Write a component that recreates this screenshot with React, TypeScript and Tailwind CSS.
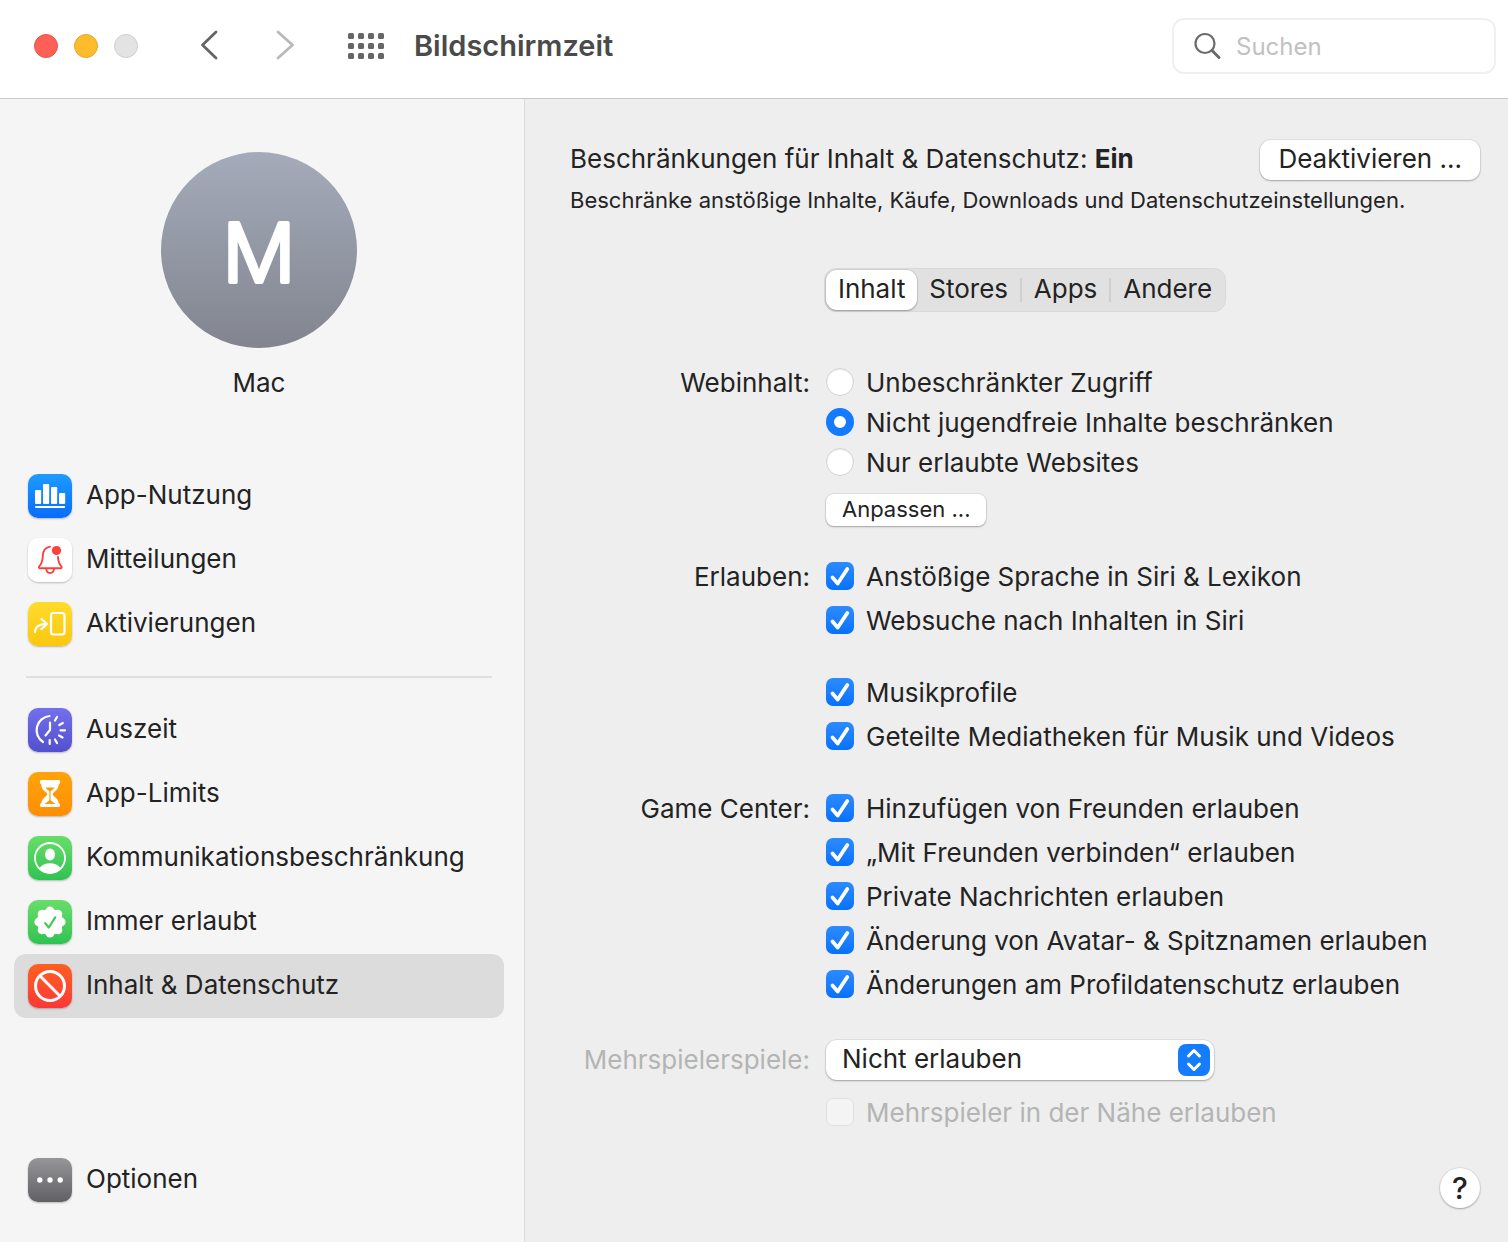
import { useState, type ReactNode } from "react";

type NavItem = {
  label: string;
  tile: string;
  icon: ReactNode;
};

const usage: NavItem[] = [
  {
    label: "App-Nutzung",
    tile: "from-[#1f9bff] to-[#0a6cfb]",
    icon: (
      <svg viewBox="0 0 44 44" fill="#fff">
        <rect x="7" y="16" width="6.200" height="14" rx="1" />
        <rect x="15" y="10" width="6.200" height="20" rx="1" />
        <rect x="23" y="13" width="6.200" height="17" rx="1" />
        <rect x="31" y="19" width="6.200" height="11" rx="1" />
        <rect x="7" y="32" width="30.200" height="2" rx="1" />
      </svg>
    ),
  },
  {
    label: "Mitteilungen",
    tile: "from-white to-white",
    icon: (
      <svg viewBox="0 0 44 44" fill="none" stroke="#f8413c" strokeWidth="1.9" strokeLinecap="round" strokeLinejoin="round">
        <path d="M22 8.6c-4.6.8-7 4.200-7.200 9.200-.2 6-1.100 8-3.400 10.400-.9 1-.5 2 .8 2h20.200c1.300 0 1.700-1 .8-2-2-2.100-2.900-4-3.200-9.200" />
        <path d="M18.200 31c.3 2.600 1.800 4 3.900 4s3.600-1.400 3.900-4" />
        <circle cx="28.500" cy="12.500" r="4.600" fill="#f8413c" stroke="none" />
      </svg>
    ),
  },
  {
    label: "Aktivierungen",
    tile: "from-[#fddd2a] to-[#fbc70d]",
    icon: (
      <svg viewBox="0 0 44 44" fill="none" stroke="#fff" strokeWidth="2.200" strokeLinecap="round" strokeLinejoin="round">
        <path d="M7 30c.3-5.500 3.500-8 11.500-8" />
        <path d="M13.500 17l5.500 5-5.500 5" />
        <rect x="23" y="11" width="13.500" height="21.500" rx="2.500" />
      </svg>
    ),
  },
];

const limits: NavItem[] = [
  {
    label: "Auszeit",
    tile: "from-[#7370ee] to-[#5350cd]",
    icon: (
      <svg viewBox="0 0 44 44" fill="none" stroke="#fff" strokeWidth="2.200" strokeLinecap="round" strokeLinejoin="round">
        <path d="M21.500 8a14.200 14.200 0 0 0-6.500 26" />
        <path d="M22 14.500V22l-4.500 5.500" />
        <path d="M27 12.500l2-3.500M31.300 17l3.500-2M32.500 22.300H37M31 27.500l3.500 2M27 31.500l2 3.500M21.700 32v4" />
      </svg>
    ),
  },
  {
    label: "App-Limits",
    tile: "from-[#ffa30a] to-[#ff8e05]",
    icon: (
      <svg viewBox="0 0 44 44">
        <path
          fill="#fff"
          d="M13.500 8h17c1 0 1.500.6 1.500 1.500v1c0 1-.5 1.500-1.300 1.700-.2 4.300-2.200 6.200-4.700 8-1.700 1.200-1.700 2.800 0 4 2.500 1.800 4.500 3.700 4.700 7 .8.200 1.300.8 1.300 1.700v.6c0 1-.5 1.500-1.500 1.500h-17c-1 0-1.500-.5-1.500-1.500v-.6c0-.9.500-1.500 1.300-1.700.2-3.300 2.200-5.200 4.700-7 1.700-1.200 1.700-2.800 0-4-2.500-1.800-4.500-3.700-4.700-8-.8-.2-1.300-.7-1.300-1.700v-1c0-.9.500-1.500 1.500-1.500z"
        />
        <path
          fill="#ff980a"
          d="M17.500 15.500h9c-.9 1.500-2.300 2.500-3.400 3.300-.3.300-.5.700-.5 1.200v7.500c0 .5.200.9.600 1.200l4.300 3.300h-11l4.300-3.300c.4-.3.600-.7.600-1.200V20c0-.5-.2-.9-.5-1.200-1.100-.8-2.500-1.800-3.400-3.300z"
        />
      </svg>
    ),
  },
  {
    label: "Kommunikationsbeschränkung",
    tile: "from-[#67de69] to-[#2fc253]",
    icon: (
      <svg viewBox="0 0 44 44" fill="#fff">
        <circle cx="22" cy="22" r="15" fill="none" stroke="#fff" strokeWidth="1.800" />
        <ellipse cx="22" cy="18.500" rx="5" ry="6" />
        <path d="M11.500 32c2-3.300 6-4.800 10.500-4.800s8.500 1.500 10.500 4.800c-2.700 3-6.300 5-10.500 5s-7.800-2-10.500-5z" />
      </svg>
    ),
  },
  {
    label: "Immer erlaubt",
    tile: "from-[#67de69] to-[#2fc253]",
    icon: (
      <svg viewBox="0 0 44 44" fill="#fff">
        <circle cx="22" cy="22" r="13" />
        {[0, 45, 90, 135, 180, 225, 270, 315].map((angle) => (
          <circle key={angle} cx="22" cy="10.800" r="4.400" transform={`rotate(${angle} 22 22)`} />
        ))}
        <path d="M17.200 23.200l3.600 4.300 6.400-10.200" fill="none" stroke="#43c95a" strokeWidth="2.200" strokeLinecap="round" strokeLinejoin="round" />
      </svg>
    ),
  },
  {
    label: "Inhalt & Datenschutz",
    tile: "from-[#ff5f20] to-[#fb3737]",
    icon: (
      <svg viewBox="0 0 44 44" fill="none" stroke="#fff" strokeWidth="3">
        <circle cx="22" cy="22" r="14.500" />
        <path d="M11.800 11.800l20.400 20.400" />
      </svg>
    ),
  },
];

const options: NavItem = {
  label: "Optionen",
  tile: "from-[#969699] to-[#616165]",
  icon: (
    <svg viewBox="0 0 44 44" fill="#fff">
      <circle cx="11.800" cy="22" r="2.700" />
      <circle cx="22" cy="22" r="2.700" />
      <circle cx="32.200" cy="22" r="2.700" />
    </svg>
  ),
};

const tabs = ["Inhalt", "Stores", "Apps", "Andere"];
const webModes = ["Unbeschränkter Zugriff", "Nicht jugendfreie Inhalte beschränken", "Nur erlaubte Websites"];

const raised = "bg-white shadow-[0_0_0_1px_rgba(0,0,0,0.06),0_1px_2px_rgba(0,0,0,0.28)]";

function NavButton({ item, active, onClick }: { item: NavItem; active: boolean; onClick: () => void }) {
  return (
    <button
      type="button"
      onClick={onClick}
      aria-current={active ? "page" : undefined}
      className={`flex h-16 w-full items-center gap-3.5 rounded-[12px] px-3.5 text-left ${active ? "bg-[#dcdcdc]" : ""}`}
    >
      <span className={`size-11 shrink-0 rounded-[10px] bg-linear-to-b shadow-[0_1px_2px_rgba(0,0,0,0.25)] ${item.tile}`}>
        {item.icon}
      </span>
      <span className="pb-0.5">{item.label}</span>
    </button>
  );
}

function Radio({ label, checked, onChange }: { label: string; checked: boolean; onChange: () => void }) {
  return (
    <label className="flex h-10 items-center gap-3">
      <input
        type="radio"
        name="webinhalt"
        checked={checked}
        onChange={onChange}
        className="size-7 shrink-0 appearance-none rounded-full border border-[#d2d2d2] bg-white shadow-[inset_0_1px_1px_rgba(0,0,0,0.08)] checked:border-[8px] checked:border-[#147bfe] checked:shadow-none"
      />
      <span className="pt-0.5">{label}</span>
    </label>
  );
}

function Check({ label, disabled = false }: { label: string; disabled?: boolean }) {
  return (
    <label className={`flex h-11 items-center gap-3 ${disabled ? "text-[#b4b4b4]" : ""}`}>
      <span className="relative size-7 shrink-0">
        <input
          type="checkbox"
          defaultChecked={!disabled}
          disabled={disabled}
          className="peer block size-7 appearance-none rounded-[7px] border border-[#d2d2d2] bg-white checked:border-0 checked:bg-linear-to-b checked:from-[#2b8bff] checked:to-[#0671fb] disabled:border-[#dfdfdf] disabled:bg-[#f4f4f4]"
        />
        <svg
          viewBox="0 0 28 28"
          className="pointer-events-none absolute inset-0 hidden peer-checked:block"
          fill="none"
          stroke="#fff"
          strokeWidth="3.800"
          strokeLinecap="round"
          strokeLinejoin="round"
        >
          <path d="M6.500 15.500l5.200 6L21.300 7" />
        </svg>
      </span>
      <span className="pt-0.5">{label}</span>
    </label>
  );
}

function Group({ label, children }: { label?: string; children: ReactNode }) {
  return (
    <fieldset className="grid grid-cols-[240px_1fr] gap-x-4" aria-label={label}>
      <div className="text-right leading-[46px]">{label}</div>
      <div>{children}</div>
    </fieldset>
  );
}

export default function App() {
  const [page, setPage] = useState("Inhalt & Datenschutz");
  const [tab, setTab] = useState("Inhalt");
  const [mode, setMode] = useState(webModes[1]);

  const nav = (item: NavItem) => (
    <NavButton key={item.label} item={item} active={page === item.label} onClick={() => setPage(item.label)} />
  );

  return (
    <div className="flex min-h-screen flex-col bg-[#eeeeee] font-['Inter','Liberation_Sans',sans-serif] text-[26px] leading-8 text-[#232323]">
      <header className="flex h-[99px] items-center border-b border-[#c8c8c8] bg-white pr-3 pb-1.5 pl-[34px]">
        <div className="flex gap-4">
          <button type="button" aria-label="Schließen" className="size-6 rounded-full border border-[#e9524c] bg-[#fe5f57]" />
          <button type="button" aria-label="Minimieren" className="size-6 rounded-full border border-[#e5a826] bg-[#febb2c]" />
          <button type="button" aria-label="Zoomen" className="size-6 rounded-full border border-[#cfcfcf] bg-[#e3e3e3]" />
        </div>
        <button type="button" aria-label="Zurück" className="ml-[60px] pb-0.5">
          <svg width="22" height="32" viewBox="0 0 22 32" fill="none" stroke="#656565" strokeWidth="2.800" strokeLinecap="round" strokeLinejoin="round">
            <path d="M18 3L4.500 16 18 29" />
          </svg>
        </button>
        <button type="button" aria-label="Vorwärts" className="ml-[54px] pb-0.5">
          <svg width="22" height="32" viewBox="0 0 22 32" fill="none" stroke="#b9b9b9" strokeWidth="2.800" strokeLinecap="round" strokeLinejoin="round">
            <path d="M4 3l14.500 13L4 29" />
          </svg>
        </button>
        <button type="button" aria-label="Alle einblenden" className="ml-[52px]">
          <svg width="36" height="26" viewBox="0 0 36 26" fill="#666">
            {[0, 10, 20, 30].map((x) =>
              [0, 10, 20].map((y) => <rect key={`${x}-${y}`} x={x} y={y} width="6" height="6" rx="1.500" />)
            )}
          </svg>
        </button>
        <h1 className="ml-[30px] text-[29px] font-semibold text-[#4a4a4a]">Bildschirmzeit</h1>
        <label className="ml-auto flex h-14 w-[324px] items-center gap-3.5 rounded-[12px] border-2 border-[#f0f0f0] pl-5">
          <svg width="28" height="28" viewBox="0 0 28 28" className="shrink-0" fill="none" stroke="#6b6b6b" strokeLinecap="round">
            <circle cx="11" cy="11.500" r="9.500" strokeWidth="2.200" />
            <path d="M18 18.500l7 7" strokeWidth="3" />
          </svg>
          <input type="search" aria-label="Suchen" placeholder="Suchen" className="w-full min-w-0 bg-transparent pt-0.5 text-[24px] outline-none placeholder:text-[#c1c1c1]" />
        </label>
      </header>

      <div className="flex flex-1">
        <aside className="flex w-[525px] shrink-0 flex-col border-r border-[#dcdcdc] bg-[#f5f5f5] pt-[53px] pr-5 pb-[30px] pl-3.5">
          <div className="flex flex-col items-center">
            <div className="size-[196px] rounded-full bg-linear-to-b from-[#a4abba] to-[#82858f]">
              <svg viewBox="0 0 196 196" role="img" aria-label="Mac">
                <text
                  x="98"
                  y="130"
                  textAnchor="middle"
                  className="text-[81px] font-light"
                  fill="#fff"
                  stroke="#fff"
                  strokeWidth="4"
                  strokeLinejoin="round"
                >
                  M
                </text>
              </svg>
            </div>
            <p className="mt-[19px]">Mac</p>
          </div>
          <nav className="mt-[65px]">
            {usage.map(nav)}
            <hr className="mx-3 my-5 border-t-2 border-[#dfdfdf]" />
            {limits.map(nav)}
          </nav>
          <div className="mt-auto">{nav(options)}</div>
        </aside>

        <main className="flex flex-1 flex-col pt-10 pr-7 pb-[34px] pl-[45px]">
          <div className="flex h-[42px] items-center justify-between">
            <h2 className="pb-0.5">
              Beschränkungen für Inhalt &amp; Datenschutz: <strong className="font-bold">Ein</strong>
            </h2>
            <button type="button" className={`h-10 rounded-[11px] px-[18px] pb-0.5 ${raised}`}>
              Deaktivieren ...
            </button>
          </div>
          <p className="mt-[3px] text-[22px]">Beschränke anstößige Inhalte, Käufe, Downloads und Datenschutzeinstellungen.</p>

          <div role="tablist" className="mt-[52px] flex h-11 w-[402px] self-center rounded-[12px] border border-[#d9d9d9] bg-[#e1e1e1] p-px">
            {tabs.map((name, i) => (
              <button
                key={name}
                type="button"
                role="tab"
                aria-selected={tab === name}
                onClick={() => setTab(name)}
                className={`flex flex-auto items-center justify-center rounded-[11px] ${tab === name ? raised : ""}`}
              >
                <span className="flex-1 pb-0.5">{name}</span>
                {i > 0 && i < tabs.length - 1 && <span className="h-6 w-0.5 bg-[#cfcfcf]" />}
              </button>
            ))}
          </div>

          <div className="mt-[50px]">
            <fieldset className="grid grid-cols-[240px_1fr] gap-x-4" aria-label="Webinhalt">
              <div className="text-right leading-[42px]">Webinhalt:</div>
              <div>
                {webModes.map((m) => (
                  <Radio key={m} label={m} checked={mode === m} onChange={() => setMode(m)} />
                ))}
                <button type="button" className={`mt-3 block h-8 rounded-[8px] px-4 pb-0.5 text-[22px] leading-[30px] ${raised}`}>
                  Anpassen ...
                </button>
              </div>
            </fieldset>
          </div>

          <div className="mt-7 flex flex-col gap-7">
            <Group label="Erlauben:">
              <Check label="Anstößige Sprache in Siri & Lexikon" />
              <Check label="Websuche nach Inhalten in Siri" />
            </Group>
            <Group>
              <Check label="Musikprofile" />
              <Check label="Geteilte Mediatheken für Musik und Videos" />
            </Group>
            <Group label="Game Center:">
              <Check label="Hinzufügen von Freunden erlauben" />
              <Check label="„Mit Freunden verbinden“ erlauben" />
              <Check label="Private Nachrichten erlauben" />
              <Check label="Änderung von Avatar- & Spitznamen erlauben" />
              <Check label="Änderungen am Profildatenschutz erlauben" />
            </Group>
          </div>

          <div className="mt-[34px] grid grid-cols-[240px_1fr] gap-x-4">
            <label htmlFor="multiplayer" className="text-right leading-10 text-[#b4b4b4]">
              Mehrspielerspiele:
            </label>
            <div>
              <div className="relative w-[388px]">
                <select id="multiplayer" className={`block h-10 w-full appearance-none rounded-[11px] px-4 pb-0.5 ${raised}`}>
                  <option>Nicht erlauben</option>
                  <option>Nur mit Freunden</option>
                  <option>Mit jedem</option>
                </select>
                <svg
                  viewBox="0 0 32 32"
                  className="pointer-events-none absolute top-1 right-1 size-8"
                  fill="none"
                  stroke="#fff"
                  strokeWidth="3"
                  strokeLinecap="round"
                  strokeLinejoin="round"
                >
                  <rect width="32" height="32" rx="8" fill="#157cfe" stroke="none" />
                  <path d="M10.500 12l5.500-5.500 5.500 5.500M10.500 20l5.500 5.500 5.500-5.500" />
                </svg>
              </div>
              <div className="mt-2.5">
                <Check label="Mehrspieler in der Nähe erlauben" disabled />
              </div>
            </div>
          </div>

          <button type="button" aria-label="Hilfe" className={`mt-auto size-10 self-end rounded-full text-[30px] font-medium ${raised}`}>
            ?
          </button>
        </main>
      </div>
    </div>
  );
}
